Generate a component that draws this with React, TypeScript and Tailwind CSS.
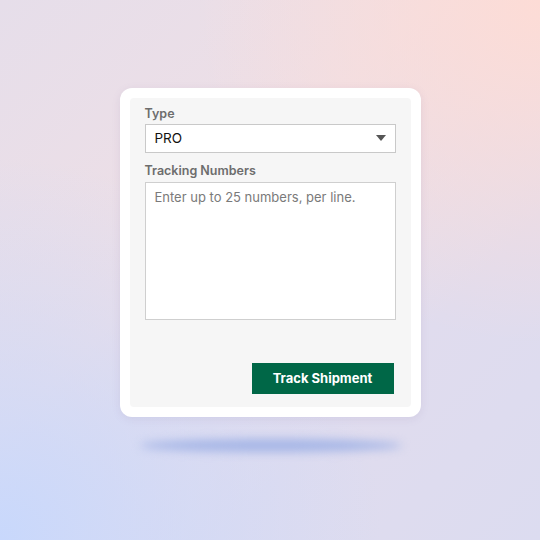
import React from "react";

export default function App() {
  return (
    <div className="w-[540px] h-[540px] relative overflow-hidden bg-[linear-gradient(135deg,#e6deea_0%,#eedfe6_40%,#e0dcee_70%,#dcdcf0_100%)] font-[Inter]">
      <div className="absolute inset-0 bg-[radial-gradient(circle_at_100%_0%,#fddcd6_0%,rgba(253,220,214,0)_45%)]" />
      <div className="absolute inset-0 bg-[radial-gradient(circle_at_0%_100%,#c8d8fc_0%,rgba(200,216,252,0)_50%)]" />
      <div className="absolute left-[140px] top-[439px] w-[262px] h-[13px] rounded-[50%] bg-[#a6b6e6] blur-[5px]" />
      <div className="relative flex justify-center pt-[88px]">
        <div className="w-[301px] h-[329px] bg-white rounded-[12px] p-[10px] shadow-[0_2px_8px_rgba(120,110,160,0.12)]">
          <div className="h-full bg-[#f6f6f6] rounded-[4px] px-[15px] pt-[8px] flex flex-col">
            <label className="text-[12.5px] font-semibold text-[#6d6d6d] leading-[16px] font-[Inter]">Type</label>
            <div className="mt-[2px] h-[29px] w-[251px] bg-white border border-[#c9c9c9] flex items-center justify-between pl-[9px] pr-[9px]">
              <span className="text-[13.5px] text-[#111] leading-none font-[Inter]">PRO</span>
              <svg width="10" height="7" viewBox="0 0 10 7">
                <path d="M0 0 H10 L5 6 Z" fill="#555" />
              </svg>
            </div>
            <label className="mt-[10px] text-[12.5px] font-semibold text-[#6d6d6d] leading-[16px] font-[Inter]">Tracking Numbers</label>
            <div className="mt-[3px] h-[138px] w-[251px] bg-white border border-[#cfcfcf] pl-[9px] pt-[5px]">
              <div className="text-[13px] text-[#7a7a7a] leading-[18px] font-[Inter]">Enter up to 25 numbers, per line.</div>
            </div>
            <div className="flex justify-end mt-[43px] pr-[2px]">
              <button className="w-[142px] h-[31px] bg-[#006747] text-white text-[13px] font-bold flex items-center justify-center font-[Inter]">
                Track Shipment
              </button>
            </div>
          </div>
        </div>
      </div>
    </div>
  );
}
